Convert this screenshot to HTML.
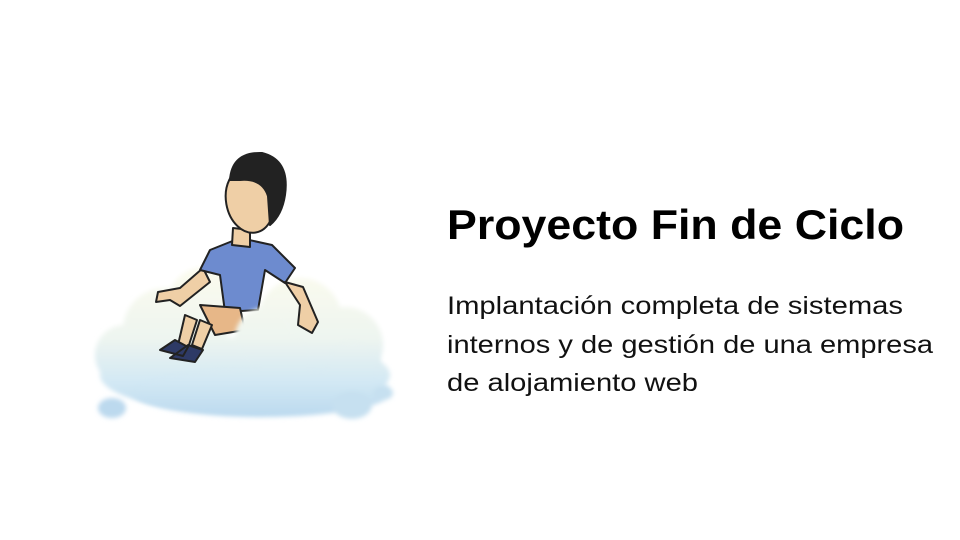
<!DOCTYPE html>
<html><head><meta charset="utf-8"><style>
html,body{margin:0;padding:0;background:#fff;width:960px;height:540px;overflow:hidden}
svg{display:block}
</style></head><body>
<svg width="960" height="540" viewBox="0 0 960 540" xmlns="http://www.w3.org/2000/svg">
<defs>
<filter id="b" x="-20%" y="-20%" width="140%" height="140%"><feGaussianBlur stdDeviation="2.5"/></filter>
<linearGradient id="cg" gradientUnits="userSpaceOnUse" x1="0" y1="270" x2="0" y2="420">
<stop offset="0" stop-color="#fbfbee"/><stop offset="0.45" stop-color="#eef5f0"/><stop offset="0.75" stop-color="#d2e8f4"/><stop offset="1" stop-color="#b9d8ee"/></linearGradient>
</defs>
<g filter="url(#b)" fill="url(#cg)">
<circle cx="165" cy="330" r="42"/>
<circle cx="205" cy="305" r="38"/>
<circle cx="300" cy="320" r="42"/>
<circle cx="345" cy="345" r="38"/>
<circle cx="125" cy="355" r="30"/>
<ellipse cx="245" cy="375" rx="145" ry="38"/>
</g>
<g stroke="#222" stroke-width="2" stroke-linejoin="round">
<path d="M203 268 L180 288 L158 292 L156 302 L170 300 L180 306 L210 282 Z" fill="#efcfa6"/>
<path d="M210 250 L240 238 L272 245 L295 268 L285 283 L265 270 L258 310 L225 312 L220 275 L200 270 Z" fill="#6d8bcf"/>
<path d="M200 305 L240 308 L245 330 L215 335 Z" fill="#e7b788"/>
<path d="M185 315 L178 345 L188 348 L197 320 Z M200 320 L192 345 L202 349 L212 325 Z" fill="#efcfa6"/>
<path d="M160 350 L175 340 L188 347 L183 356 Z M170 358 L188 345 L203 350 L195 362 Z" fill="#2e3a66"/>
<path d="M233 228 L232 245 L250 247 L250 230 Z" fill="#efcfa6"/>
<ellipse cx="250" cy="200" rx="24" ry="33" fill="#efcfa6" transform="rotate(-10 250 200)"/>
<path d="M230 180 Q232 152 262 153 Q290 160 285 195 Q282 215 270 225 L268 196 Q262 178 240 180 Z" fill="#222"/>
</g>
<g filter="url(#b)" fill="url(#cg)">
<circle cx="265" cy="338" r="30"/>
<circle cx="285" cy="360" r="28"/>
<circle cx="352" cy="368" r="28"/>
<ellipse cx="262" cy="392" rx="130" ry="25"/>
<ellipse cx="112" cy="408" rx="14" ry="10" fill="#bcd9ee"/>
<ellipse cx="352" cy="405" rx="20" ry="14" fill="#c6e0f0"/>
<ellipse cx="383" cy="393" rx="10" ry="7" fill="#c6e0f0"/>
</g>
<g stroke="#222" stroke-width="2" stroke-linejoin="round">
<path d="M285 282 L300 305 L298 325 L312 333 L318 322 L303 287 Z" fill="#efcfa6"/>
</g>
<text x="447" y="239" font-family="Liberation Sans, sans-serif" font-weight="bold" font-size="42" textLength="457" lengthAdjust="spacingAndGlyphs" fill="#000">Proyecto Fin de Ciclo</text>
<g font-family="Liberation Sans, sans-serif" font-size="25" fill="#111">
<text x="447" y="314" textLength="456" lengthAdjust="spacingAndGlyphs">Implantación completa de sistemas</text>
<text x="447" y="353" textLength="486" lengthAdjust="spacingAndGlyphs">internos y de gestión de una empresa</text>
<text x="447" y="391" textLength="251" lengthAdjust="spacingAndGlyphs">de alojamiento web</text>
</g>
</svg>
</body></html>
